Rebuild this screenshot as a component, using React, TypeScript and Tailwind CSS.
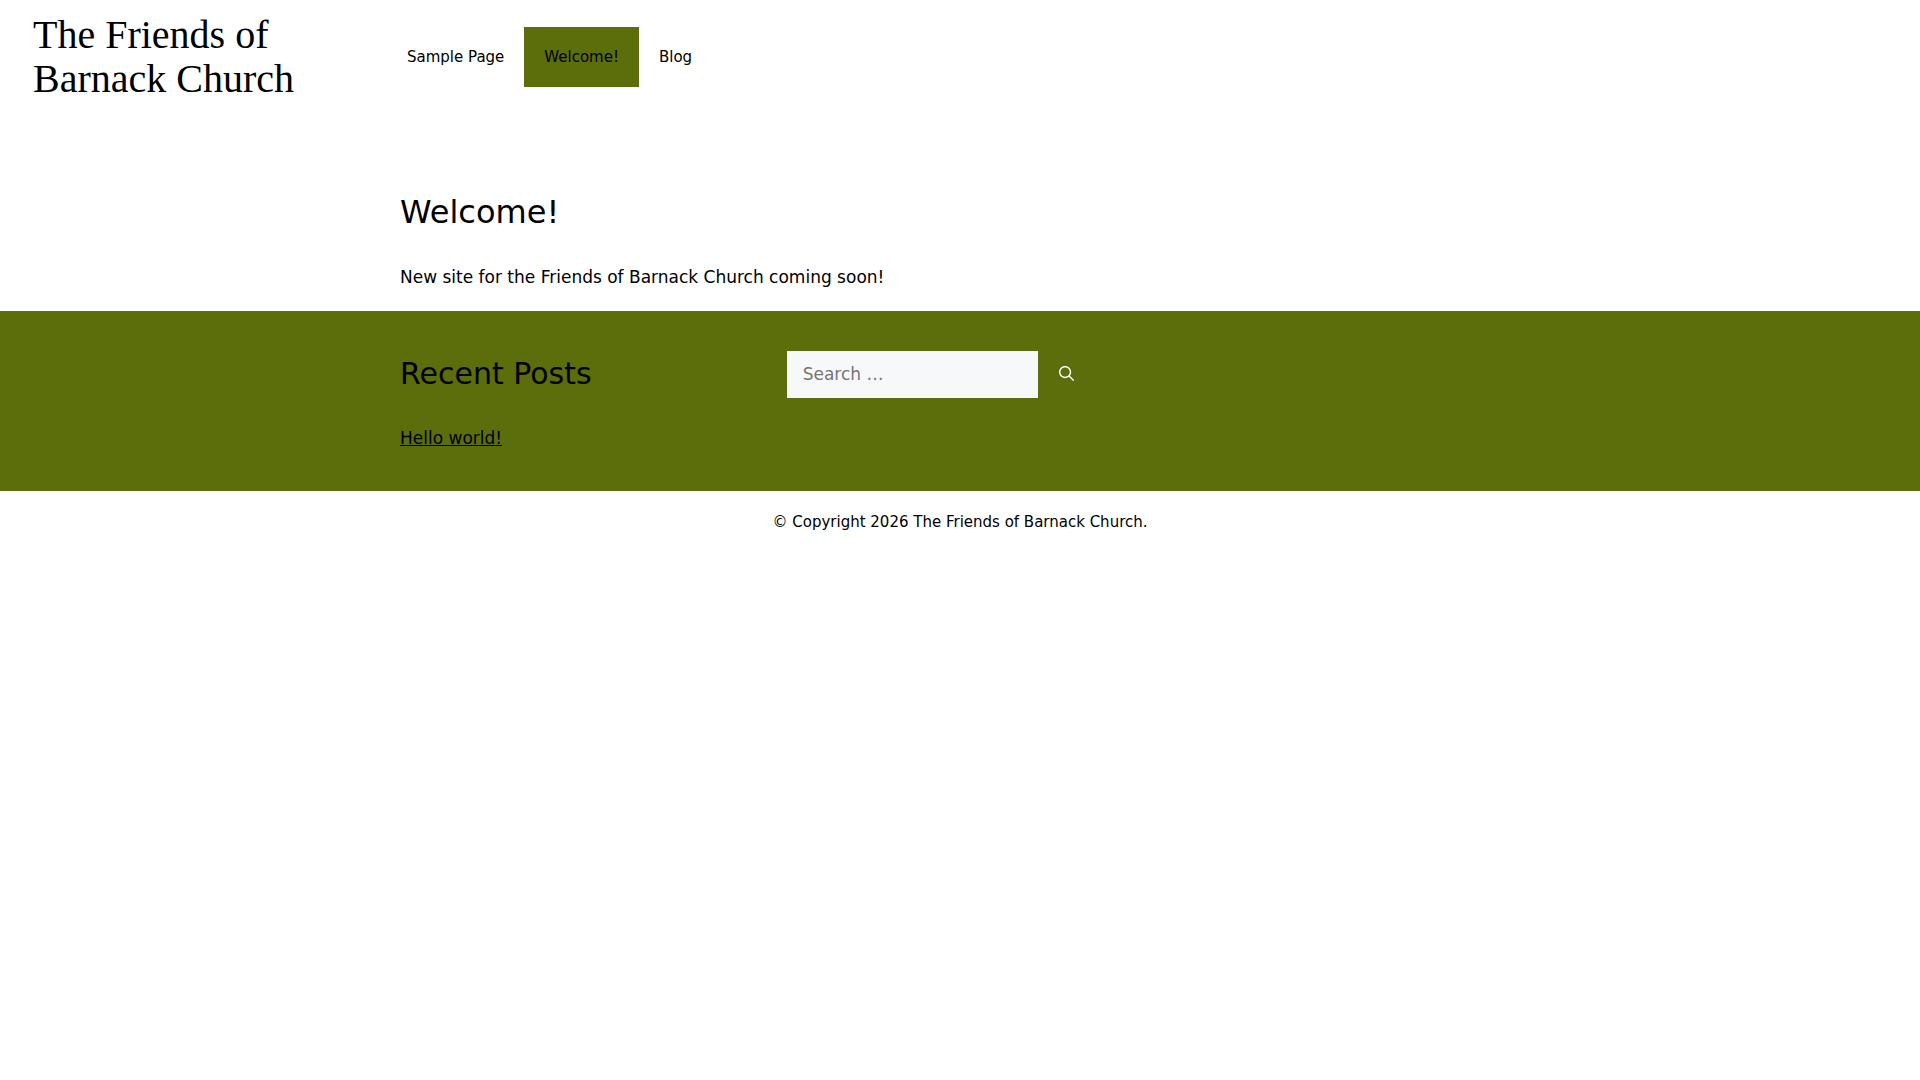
const navItems = [
  { label: "Sample Page", current: false },
  { label: "Welcome!", current: true },
  { label: "Blog", current: false },
];

function SearchIcon() {
  return (
    <svg viewBox="0 0 512 512" className="size-[15px] fill-current" aria-hidden="true">
      <path
        fillRule="evenodd"
        clipRule="evenodd"
        d="M208 48c-88.366 0-160 71.634-160 160s71.634 160 160 160 160-71.634 160-160S296.366 48 208 48zm-208 160C0 93.125 93.125 0 208 0s208 93.125 208 208c0 48.741-16.765 93.566-44.843 129.024l133.826 134.018c9.366 9.379 9.355 24.575-.025 33.941-9.379 9.366-24.575 9.355-33.941-.025L337.238 370.987C301.747 399.167 256.839 416 208 416 93.125 416 0 322.875 0 208z"
      />
    </svg>
  );
}

function Header() {
  return (
    <header className="flex items-center py-[13px] pl-[33px]">
      <div className="w-[354px] pr-14 font-['Liberation_Serif',serif] text-[40px] leading-11">
        <a href="#home">The Friends of Barnack Church</a>
      </div>
      <nav aria-label="Primary">
        <ul className="flex">
          {navItems.map((item) => (
            <li key={item.label}>
              <a
                href="#page"
                aria-current={item.current ? "page" : undefined}
                className={
                  item.current
                    ? "block bg-[#5c6d0b] px-5 text-[15px] leading-15"
                    : "block px-5 text-[15px] leading-15"
                }
              >
                {item.label}
              </a>
            </li>
          ))}
        </ul>
      </nav>
    </header>
  );
}

export default function App() {
  return (
    <div className="min-h-screen bg-white font-['DejaVu_Sans',sans-serif] text-[17px] leading-[26px] text-black">
      <Header />
      <main className="mx-auto max-w-[1120px] pt-[74px] pb-[21px]">
        <h1 className="mb-7 text-[32px] leading-12">Welcome!</h1>
        <p>New site for the Friends of Barnack Church coming soon!</p>
      </main>
      <footer>
        <div className="bg-[#5c6d0b] py-10">
          <div className="mx-auto grid max-w-[1120px] grid-cols-3 gap-x-10">
            <section>
              <h2 className="mb-[29px] text-[30px] leading-[45px]">Recent Posts</h2>
              <ul>
                <li>
                  <a href="#hello-world" className="underline">
                    Hello world!
                  </a>
                </li>
              </ul>
            </section>
            <form role="search" className="flex items-start" onSubmit={(e) => e.preventDefault()}>
              <input
                type="search"
                aria-label="Search for:"
                placeholder="Search …"
                className="h-[47px] w-[251px] border border-[#f7f8f9] bg-[#f7f8f9] px-[15px] pb-[2px] placeholder:text-[#757575]"
              />
              <button type="submit" aria-label="Search" className="flex h-[45px] items-center px-[21px] text-white">
                <SearchIcon />
              </button>
            </form>
          </div>
        </div>
        <div className="py-5 text-center text-[15px] leading-[22px]">
          © Copyright 2026 The Friends of Barnack Church.
        </div>
      </footer>
    </div>
  );
}
